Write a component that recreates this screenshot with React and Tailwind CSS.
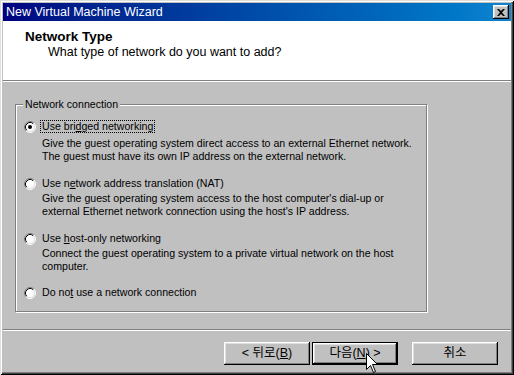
import React from 'react'

const FONT = "font-['Liberation_Sans','Noto_Sans_CJK_KR',sans-serif]"

function Radio({ checked }) {
  return (
    <svg width="12" height="12" viewBox="0 0 12 12" className="shrink-0">
      <circle cx="6" cy="6" r="5" fill="#fff" />
      <path d="M2.11 9.89 A5.5 5.5 0 0 1 9.89 2.11" fill="none" stroke="#808080" strokeWidth="1" />
      <path d="M9.89 2.11 A5.5 5.5 0 0 1 2.11 9.89" fill="none" stroke="#fff" strokeWidth="1" />
      <path d="M2.82 9.18 A4.5 4.5 0 0 1 9.18 2.82" fill="none" stroke="#000" strokeWidth="1" />
      <path d="M9.18 2.82 A4.5 4.5 0 0 1 2.82 9.18" fill="none" stroke="#dfdfdf" strokeWidth="1" />
      {checked && <circle cx="6" cy="6" r="2" fill="#000" />}
    </svg>
  )
}

function Option({ checked, label, lines = [], focused, descGap = 'mt-[2px]' }) {
  return (
    <div className="flex">
      <div className="w-[18px] h-[13px] flex items-center">
        <Radio checked={checked} />
      </div>
      <div className="text-[10.6px] leading-[13px] text-black">
        <div className="h-[13px]">
          {focused ? (
            <span className="inline-block -ml-[2px] px-[1px] border border-dotted border-black leading-[11px]">{label}</span>
          ) : label}
        </div>
        {lines.length > 0 && (
          <div className={descGap}>
            {lines.map(l => <div key={l}>{l}</div>)}
          </div>
        )}
      </div>
    </div>
  )
}

function Button({ children, isDefault }) {
  const bevel = 'shadow-[inset_-1px_-1px_0_#000,inset_1px_1px_0_#fff,inset_-2px_-2px_0_#808080,inset_2px_2px_0_#dfdfdf]'
  if (isDefault) {
    return (
      <div className="w-[86px] h-[23px] border border-black">
        <div className={`w-full h-full bg-[#c0c0c0] ${bevel} flex items-center justify-center text-[12.5px] text-black`}>{children}</div>
      </div>
    )
  }
  return (
    <div className={`w-[86px] h-[23px] bg-[#c0c0c0] ${bevel} flex items-center justify-center text-[12.5px] text-black`}>{children}</div>
  )
}

export default function App() {
  return (
    <div className={`relative w-[514px] h-[375px] overflow-hidden bg-[#c0c0c0] p-[3px] ${FONT} shadow-[inset_1px_1px_0_#dfdfdf,inset_-1px_-1px_0_#000,inset_2px_2px_0_#fff,inset_-2px_-2px_0_#404040,inset_-3px_-3px_0_#808080]`}>
      {/* Title bar */}
      <div className="h-[18px] flex items-center bg-gradient-to-r from-[#000080] to-[#1084d0] pl-[3px] pr-[2px]">
        <span className="text-white text-[12.5px] leading-[18px] flex-1">New Virtual Machine Wizard</span>
        <div className="w-[16px] h-[14px] bg-[#c0c0c0] flex items-center justify-center shadow-[inset_-1px_-1px_0_#000,inset_1px_1px_0_#fff,inset_-2px_-2px_0_#808080,inset_2px_2px_0_#dfdfdf]">
          <svg width="8" height="7" viewBox="0 0 8 7">
            <path d="M0 0 L2 0 L4 2 L6 0 L8 0 L5 3.5 L8 7 L6 7 L4 5 L2 7 L0 7 L3 3.5 Z" fill="#000" />
          </svg>
        </div>
      </div>

      {/* Header */}
      <div className="h-[59px] bg-white pl-[22px] pt-[8px]">
        <div className="font-bold text-[13.5px] leading-[16px] text-black">Network Type</div>
        <div className="ml-[23px] text-[12.5px] leading-[15px] text-black">What type of network do you want to add?</div>
      </div>
      <div className="h-px bg-[#808080]" />
      <div className="h-px bg-white" />

      {/* Group box */}
      <div className="relative mt-[22px] ml-[12px] w-[412px] h-[208px] border border-[#808080] shadow-[1px_1px_0_#fff,inset_1px_1px_0_#fff] pt-[15px] pl-[8px]">
        <span className="absolute left-[7px] -top-[7px] px-[2px] bg-[#c0c0c0] text-[10.6px] leading-[13px] text-black">Network connection</span>
        <div className="flex flex-col">
          <Option
            checked
            focused
            descGap="mt-[4px]"
            label={<>Use bri<u>d</u>ged networking</>}
            lines={[
              'Give the guest operating system direct access to an external Ethernet network.',
              'The guest must have its own IP address on the external network.',
            ]}
          />
          <div className="mt-[14px]">
            <Option
              label={<>Use n<u>e</u>twork address translation (NAT)</>}
              lines={[
                "Give the guest operating system access to the host computer's dial-up or",
                "external Ethernet network connection using the host's IP address.",
              ]}
            />
          </div>
          <div className="mt-[14px]">
            <Option
              label={<>Use <u>h</u>ost-only networking</>}
              lines={[
                'Connect the guest operating system to a private virtual network on the host',
                'computer.',
              ]}
            />
          </div>
          <div className="mt-[13px]">
            <Option label={<>Do no<u>t</u> use a network connection</>} />
          </div>
        </div>
      </div>

      {/* Separator */}
      <div className="mt-[17px] h-px bg-[#808080]" />
      <div className="h-px bg-white" />

      {/* Buttons */}
      <div className="mt-[11px] flex justify-end pr-[13px]">
        <Button>&lt; 뒤로(<u>B</u>)</Button>
        <div className="ml-[2px]">
          <Button isDefault>다음(<u>N</u>) &gt;</Button>
        </div>
        <div className="ml-[14px]">
          <Button>취소</Button>
        </div>
      </div>

      {/* Mouse cursor */}
      <svg className="absolute left-[366px] top-[353px]" width="13" height="21" viewBox="0 0 13 21">
        <path d="M0.5 0.5 L0.5 16.5 L4.5 12.5 L7.5 19.5 L9.5 18.5 L6.5 11.5 L11.5 11.5 Z" fill="#fff" stroke="#000" strokeWidth="1" />
      </svg>
    </div>
  )
}
